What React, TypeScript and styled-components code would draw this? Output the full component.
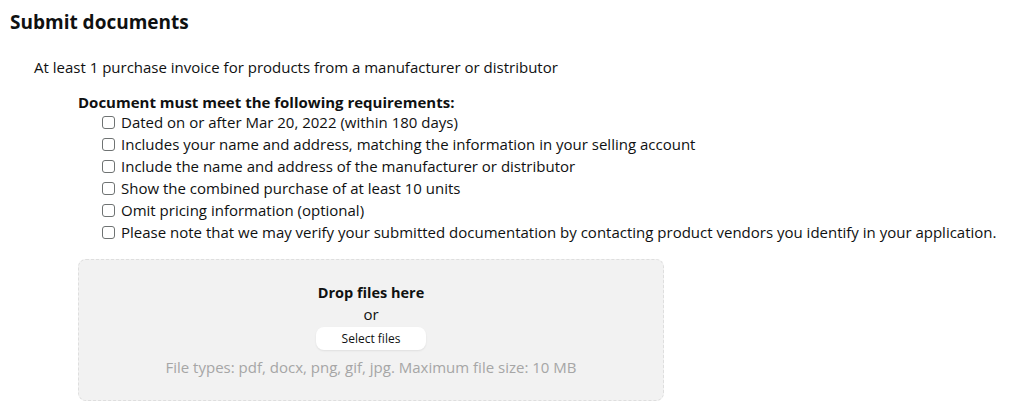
import React from "react";
import styled, { createGlobalStyle } from "styled-components";

const Global = createGlobalStyle`
  html, body { margin: 0; padding: 0; background: #ffffff; }
  body { font-family: "Open Sans", "Noto Sans", Arial, sans-serif; color: #0f1111; }
`;

const Page = styled.div`
  padding: 8px 10px;
`;

const Title = styled.h2`
  margin: 0;
  font-size: 19px;
  font-weight: 700;
  line-height: 28px;
`;

const Intro = styled.p`
  margin: 21px 0 0 24px;
  font-size: 15px;
  line-height: 20px;
`;

const Requirements = styled.div`
  margin: 16px 0 0 68px;
`;

const ReqHeading = styled.div`
  font-size: 15px;
  font-weight: 700;
  line-height: 18px;
`;

const List = styled.ul`
  list-style: none;
  margin: 0;
  padding: 0 0 0 24px;
`;

const Item = styled.li`
  display: flex;
  align-items: center;
  gap: 6px;
  font-size: 15px;
  line-height: 22px;
`;

const Box = styled.span`
  width: 11px;
  height: 11px;
  border: 1px solid #6f7373;
  border-radius: 3px;
  flex: none;
`;

const Drop = styled.div`
  margin: 16px 0 0 0;
  width: 586px;
  height: 142px;
  box-sizing: border-box;
  background: #f2f2f2;
  border: 1.5px dashed #dedede;
  border-radius: 8px;
  display: flex;
  flex-direction: column;
  align-items: center;
  justify-content: center;
`;

const DropTitle = styled.div`
  font-size: 14.5px;
  font-weight: 700;
  line-height: 20px;
`;

const Or = styled.div`
  font-size: 15px;
  line-height: 22px;
`;

const SelectBtn = styled.button`
  margin-top: 2px;
  width: 110px;
  height: 23px;
  background: #ffffff;
  border: none;
  border-radius: 8px;
  box-shadow: 0 1px 2px rgba(0, 0, 0, 0.08);
  font-family: inherit;
  font-size: 12px;
  color: #0f1111;
`;

const Hint = styled.div`
  margin-top: 7px;
  font-size: 15px;
  line-height: 20px;
  color: #a6a6a6;
`;

const items = [
  "Dated on or after Mar 20, 2022 (within 180 days)",
  "Includes your name and address, matching the information in your selling account",
  "Include the name and address of the manufacturer or distributor",
  "Show the combined purchase of at least 10 units",
  "Omit pricing information (optional)",
  "Please note that we may verify your submitted documentation by contacting product vendors you identify in your application.",
];

export default function App() {
  return (
    <>
      <Global />
      <Page>
        <Title>Submit documents</Title>
        <Intro>At least 1 purchase invoice for products from a manufacturer or distributor</Intro>
        <Requirements>
          <ReqHeading>Document must meet the following requirements:</ReqHeading>
          <List>
            {items.map((t) => (
              <Item key={t}>
                <Box />
                {t}
              </Item>
            ))}
          </List>
          <Drop>
            <DropTitle>Drop files here</DropTitle>
            <Or>or</Or>
            <SelectBtn>Select files</SelectBtn>
            <Hint>File types: pdf, docx, png, gif, jpg. Maximum file size: 10 MB</Hint>
          </Drop>
        </Requirements>
      </Page>
    </>
  );
}
